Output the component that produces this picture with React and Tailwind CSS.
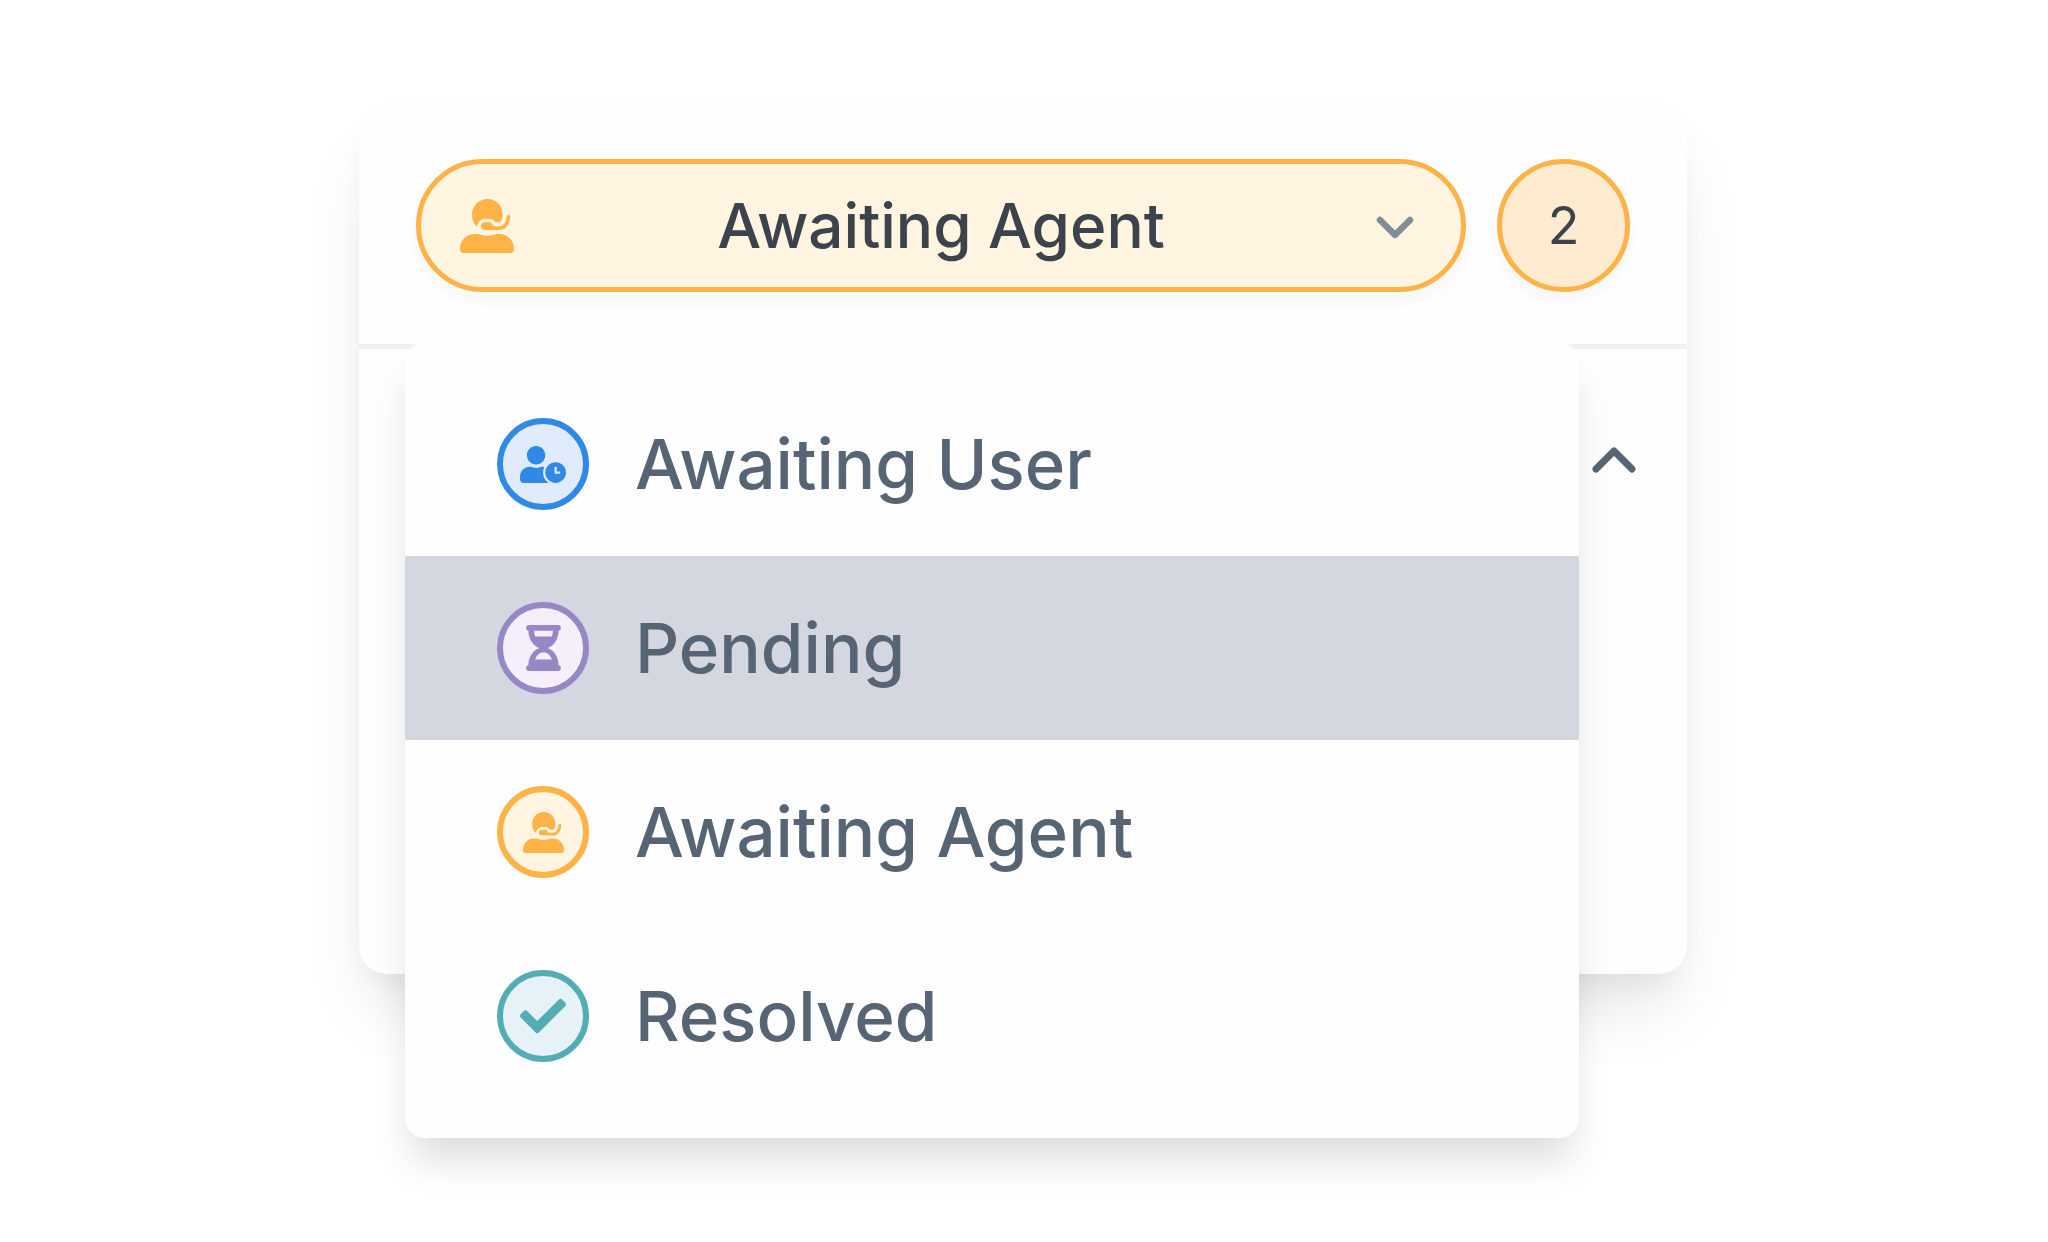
import { FaCheck, FaHourglassHalf, FaUserClock } from "react-icons/fa";

function HeadsetIcon({ className }) {
  return (
    <svg viewBox="0 0 162 162" fill="currentColor" className={className} aria-hidden="true">
      <path d="M51 83C41 74 36 61 36 47C36 20 57 0 82 0C108 0 128 20 128 47C128 57 125 65 120 70H108C102 70 104 59 88 59H76C62 59 53 69 51 83Z" />
      <path d="M74 70H90C97 70 97 82 104 82H116C131 82 138 70 140 53C140 45 151 45 151 53C149 78 137 93 118 93H76C67 93 63 88 63 82C63 75 67 70 74 70Z" />
      <path d="M0 151C0 124 18 105 44 105H54C72 112 92 112 110 105H118C144 105 162 124 162 151C162 158 158 162 151 162H11C4 162 0 158 0 151Z" />
    </svg>
  );
}

function Chevron({ up, className }) {
  return (
    <svg
      viewBox="0 0 54 54"
      fill="none"
      stroke="currentColor"
      strokeWidth={up ? 7 : 6.5}
      strokeLinecap="round"
      strokeLinejoin="round"
      className={className}
      aria-hidden="true"
    >
      <path d={up ? "M9 36L27 18L45 36" : "M12 21L27 36L42 21"} />
    </svg>
  );
}

const statuses = [
  {
    label: "Awaiting User",
    icon: <FaUserClock className="h-[37px] w-[46px]" />,
    badge: "border-[#3089e6] bg-[#e0ecfd] text-[#3089e6]",
  },
  {
    label: "Pending",
    icon: <FaHourglassHalf className="h-[46px] w-[35px]" />,
    badge: "border-[#9688c4] bg-[#f4effa] text-[#9688c4]",
    active: true,
  },
  {
    label: "Awaiting Agent",
    icon: <HeadsetIcon className="size-[41px]" />,
    badge: "border-[#ffb347] bg-[#fff5e0] text-[#ffb347]",
    selected: true,
  },
  {
    label: "Resolved",
    icon: <FaCheck className="size-[46px]" />,
    badge: "border-[#52adb4] bg-[#e6f2f7] text-[#52adb4]",
  },
];

function StatusOption({ label, icon, badge, active, selected }) {
  return (
    <li>
      <button
        type="button"
        role="option"
        aria-selected={Boolean(selected)}
        className={`flex h-[184px] w-full items-center gap-[46px] px-[92px] text-left ${active ? "bg-[#d4d7e0]" : ""}`}
      >
        <span className={`flex size-[92px] shrink-0 items-center justify-center rounded-full border-6 ${badge}`}>
          {icon}
        </span>
        <span className="text-[69px] leading-[82px] font-medium text-[#566474]">{label}</span>
      </button>
    </li>
  );
}

export default function App() {
  return (
    <main className="min-h-screen bg-white pt-[102px] pr-[26px] pl-6 font-['Inter',sans-serif]">
      <section className="relative mx-auto w-full max-w-[1328px] rounded-[28px] bg-[#fefefe] shadow-[0_46px_69px_-14px_rgba(0,0,0,0.1),0_18px_28px_-9px_rgba(0,0,0,0.05)]">
        <header className="flex gap-[31px] border-b-5 border-[#f0eff2] px-[57px] pt-[57px] pb-[52px]">
          <button
            type="button"
            aria-haspopup="listbox"
            aria-expanded="true"
            className="flex h-[133px] flex-1 items-center rounded-full border-5 border-[#ffb347] bg-[#fff5e0] px-[39px] shadow-[0_9px_14px_rgba(70,50,110,0.04)]"
          >
            <HeadsetIcon className="size-[54px] text-[#ffb347]" />
            <span className="flex-1 text-center text-[62px] leading-[76px] font-medium text-[#3d434d]">
              Awaiting Agent
            </span>
            <Chevron className="size-[54px] text-[#7f8e97]" />
          </button>
          <span className="flex size-[133px] items-center justify-center rounded-full border-5 border-[#ffb347] bg-[#ffebd0] text-[52px] leading-[64px] text-[#3d434d] shadow-[0_9px_14px_rgba(70,50,110,0.04)]">
            2
          </span>
        </header>

        <div className="flex min-h-[625px] items-start justify-end px-[46px] pt-[84px]">
          <button type="button" aria-label="Collapse">
            <Chevron up className="size-[54px] text-[#566474]" />
          </button>
        </div>

        <ul
          role="listbox"
          aria-label="Status"
          className="absolute top-[240px] right-[108px] left-[46px] rounded-[20px] bg-[#fefefe] py-[30px] shadow-[0_28px_40px_-8px_rgba(0,0,0,0.15)]"
        >
          {statuses.map((status) => (
            <StatusOption key={status.label} {...status} />
          ))}
        </ul>
      </section>
    </main>
  );
}
